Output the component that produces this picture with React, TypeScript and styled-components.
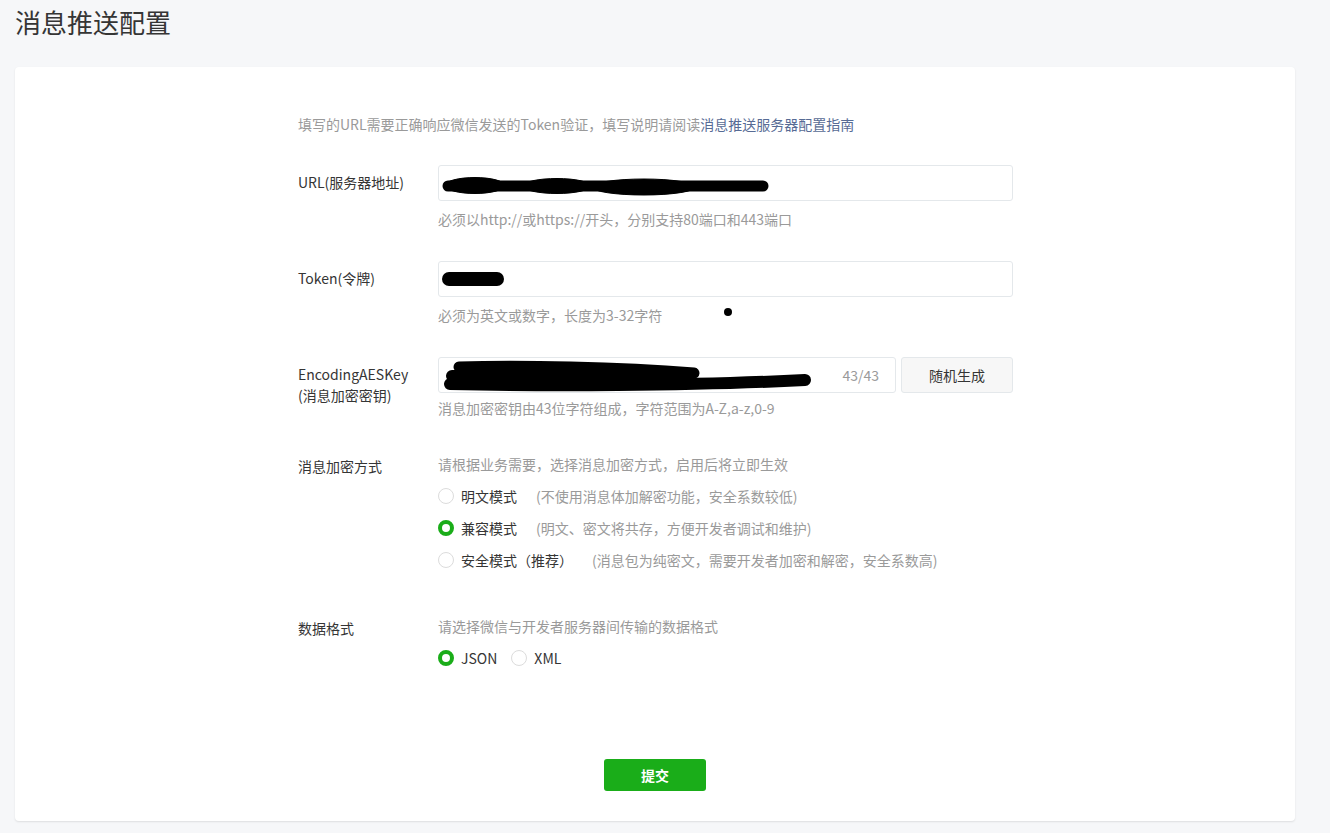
import React, { useState } from 'react';
import styled, { createGlobalStyle } from 'styled-components';

const GlobalStyle = createGlobalStyle`
  html, body {
    margin: 0;
    padding: 0;
    background: #f6f7f9;
    font-family: "Noto Sans CJK SC", "Microsoft YaHei", "Liberation Sans", sans-serif;
    color: #353535;
  }
`;

const Page = styled.div`
  padding: 0 35px 12px 15px;
`;

const Title = styled.h1`
  margin: 0 0 23px;
  font-size: 26px;
  font-weight: 400;
  line-height: 44px;
  height: 44px;
  color: #353535;
`;

const Card = styled.div`
  width: 1280px;
  background: #fff;
  border-radius: 4px;
  box-shadow: 0 1px 2px rgba(0, 0, 0, 0.1);
  padding: 47px 0 30px;
  box-sizing: border-box;
`;

const Form = styled.div`
  padding-left: 283px;
`;

const Intro = styled.p`
  margin: 0 0 31px;
  font-size: 14px;
  line-height: 20px;
  color: #9a9a9a;
`;

const Link = styled.a`
  color: #576b95;
  text-decoration: none;
  cursor: pointer;
`;

const Row = styled.div<{ $top: number }>`
  display: grid;
  grid-template-columns: 140px 575px;
  margin-top: ${p => p.$top}px;
`;

const Label = styled.div<{ $pad: number }>`
  font-size: 14px;
  line-height: 21px;
  padding-top: ${p => p.$pad}px;
  color: #353535;
`;

const Field = styled.div`
  display: flex;
  flex-direction: column;
`;

const InputLine = styled.div`
  display: flex;
  gap: 5px;
`;

const InputBox = styled.div`
  position: relative;
  flex: 1 0 auto;
  height: 36px;
  border: 1px solid #e4e8eb;
  border-radius: 3px;
  box-sizing: border-box;
  background: #fff;
  display: flex;
  align-items: center;
  justify-content: flex-end;
  padding: 0 16px;
`;

const Counter = styled.span`
  font-size: 14px;
  color: #9a9a9a;
`;

const Scribble = styled.svg`
  position: absolute;
  left: 0;
  top: 0;
  pointer-events: none;
`;

const GhostButton = styled.button`
  width: 112px;
  height: 36px;
  border: 1px solid #e4e8eb;
  border-radius: 3px;
  background: #f7f7f7;
  color: #353535;
  font-family: inherit;
  font-size: 14px;
  cursor: pointer;
`;

const Hint = styled.div<{ $top?: number }>`
  position: relative;
  margin-top: ${p => p.$top ?? 8}px;
  font-size: 14px;
  line-height: 20px;
  color: #9a9a9a;
`;

const Dot = styled.span`
  position: absolute;
  left: 286px;
  top: 3px;
  width: 8px;
  height: 8px;
  border-radius: 50%;
  background: #000;
`;

const Options = styled.div<{ $inline?: boolean }>`
  display: flex;
  flex-direction: ${p => (p.$inline ? 'row' : 'column')};
  gap: ${p => (p.$inline ? '14px' : '0')};
  margin-top: 6px;
`;

const Option = styled.label`
  display: flex;
  align-items: center;
  height: 32px;
  font-size: 14px;
  cursor: pointer;
`;

const Radio = styled.span<{ $checked: boolean }>`
  width: 16px;
  height: 16px;
  border-radius: 50%;
  box-sizing: border-box;
  border: ${p => (p.$checked ? '4px solid #1aad19' : '1px solid #dcdcdc')};
  background: #fff;
  margin-right: 7px;
  flex-shrink: 0;
`;

const OptionText = styled.span`
  color: #353535;
`;

const OptionDesc = styled.span`
  color: #9a9a9a;
  margin-left: 19px;
`;

const Footer = styled.div`
  display: flex;
  justify-content: center;
  margin-top: 85px;
`;

const Submit = styled.button`
  width: 102px;
  height: 32px;
  border: none;
  border-radius: 3px;
  background: #1aad19;
  color: #fff;
  font-family: inherit;
  font-size: 14px;
  font-weight: 600;
  cursor: pointer;
`;

const modes = [
  { key: 'plain', name: '明文模式', desc: '(不使用消息体加解密功能，安全系数较低)' },
  { key: 'compat', name: '兼容模式', desc: '(明文、密文将共存，方便开发者调试和维护)' },
  { key: 'safe', name: '安全模式（推荐）', desc: '(消息包为纯密文，需要开发者加密和解密，安全系数高)' },
];

export default function App() {
  const [mode, setMode] = useState('compat');
  const [format, setFormat] = useState('JSON');

  return (
    <>
      <GlobalStyle />
      <Page>
        <Title>消息推送配置</Title>
        <Card>
          <Form>
            <Intro>
              填写的URL需要正确响应微信发送的Token验证，填写说明请阅读<Link>消息推送服务器配置指南</Link>
            </Intro>

            <Row $top={0}>
              <Label $pad={7}>URL(服务器地址)</Label>
              <Field>
                <InputBox>
                  <Scribble width="575" height="36" viewBox="0 0 575 36">
                    <g fill="#000" stroke="#000" strokeLinecap="round">
                      <path d="M9 20 L324 20" strokeWidth="11" fill="none" />
                      <ellipse cx="36" cy="19.5" rx="30" ry="8" />
                      <ellipse cx="118" cy="20" rx="34" ry="7.5" />
                      <ellipse cx="205" cy="21" rx="52" ry="8" />
                    </g>
                  </Scribble>
                </InputBox>
                <Hint>必须以http://或https://开头，分别支持80端口和443端口</Hint>
              </Field>
            </Row>

            <Row $top={32}>
              <Label $pad={7}>Token(令牌)</Label>
              <Field>
                <InputBox>
                  <Scribble width="575" height="36" viewBox="0 0 575 36">
                    <path d="M10 17 L58 17" stroke="#000" strokeWidth="14" strokeLinecap="round" fill="none" />
                  </Scribble>
                </InputBox>
                <Hint>
                  必须为英文或数字，长度为3-32字符
                  <Dot />
                </Hint>
              </Field>
            </Row>

            <Row $top={32}>
              <Label $pad={7}>
                EncodingAESKey
                <br />
                (消息加密密钥)
              </Label>
              <Field>
                <InputLine>
                  <InputBox>
                    <Scribble width="458" height="36" viewBox="0 0 458 36">
                      <g fill="none" stroke="#000" strokeLinecap="round">
                        <path d="M20 9 C 80 7, 180 9, 255 15" strokeWidth="11" />
                        <path d="M13 18 L 250 17" strokeWidth="12" />
                        <path d="M11 26 C 100 28, 250 28, 366 22" strokeWidth="12" />
                      </g>
                    </Scribble>
                    <Counter>43/43</Counter>
                  </InputBox>
                  <GhostButton>随机生成</GhostButton>
                </InputLine>
                <Hint $top={5}>消息加密密钥由43位字符组成，字符范围为A-Z,a-z,0-9</Hint>
              </Field>
            </Row>

            <Row $top={36}>
              <Label $pad={2}>消息加密方式</Label>
              <Field>
                <Hint $top={0}>请根据业务需要，选择消息加密方式，启用后将立即生效</Hint>
                <Options>
                  {modes.map(m => (
                    <Option key={m.key} onClick={() => setMode(m.key)}>
                      <Radio $checked={mode === m.key} />
                      <OptionText>{m.name}</OptionText>
                      <OptionDesc>{m.desc}</OptionDesc>
                    </Option>
                  ))}
                </Options>
              </Field>
            </Row>

            <Row $top={40}>
              <Label $pad={2}>数据格式</Label>
              <Field>
                <Hint $top={0}>请选择微信与开发者服务器间传输的数据格式</Hint>
                <Options $inline>
                  {['JSON', 'XML'].map(f => (
                    <Option key={f} onClick={() => setFormat(f)}>
                      <Radio $checked={format === f} />
                      <OptionText>{f}</OptionText>
                    </Option>
                  ))}
                </Options>
              </Field>
            </Row>
          </Form>
          <Footer>
            <Submit>提交</Submit>
          </Footer>
        </Card>
      </Page>
    </>
  );
}
